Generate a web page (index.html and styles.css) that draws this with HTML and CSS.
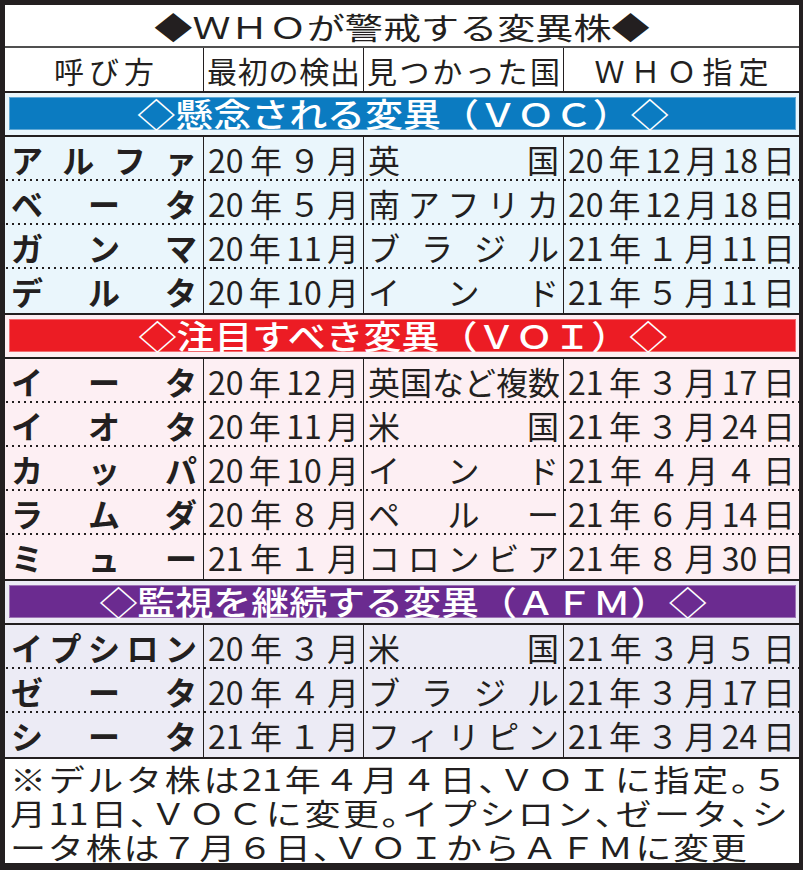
FILE: index.html
```html
<!DOCTYPE html>
<html lang="ja">
<head>
<meta charset="utf-8">
<title>WHOが警戒する変異株</title>
<link rel="stylesheet" href="styles.css">
</head>
<body>
<div class="sheet">
  <div class="title"><span>◆ＷＨＯが警戒する変異株◆</span></div>
  <div class="row head">
    <div class="c mid sp5">呼び方</div>
    <div class="c"><i>最</i><i>初</i><i>の</i><i>検</i><i>出</i></div>
    <div class="c"><i>見</i><i>つ</i><i>か</i><i>っ</i><i>た</i><i>国</i></div>
    <div class="c mid sp6">ＷＨＯ指定</div>
  </div>

  <section class="group voc">
    <div class="band"><div class="bar"><span>◇懸念される変異（ＶＯＣ）◇</span></div></div>
    <div class="row">
      <div class="c name"><i>ア</i><i>ル</i><i>フ</i><i>ァ</i></div>
      <div class="c"><i>20</i><i>年</i><i>９</i><i>月</i></div>
      <div class="c"><i>英</i><i>国</i></div>
      <div class="c"><i>20</i><i>年</i><i>12</i><i>月</i><i>18</i><i>日</i></div>
    </div>
    <div class="row">
      <div class="c name"><i>ベ</i><i>ー</i><i>タ</i></div>
      <div class="c"><i>20</i><i>年</i><i>５</i><i>月</i></div>
      <div class="c"><i>南</i><i>ア</i><i>フ</i><i>リ</i><i>カ</i></div>
      <div class="c"><i>20</i><i>年</i><i>12</i><i>月</i><i>18</i><i>日</i></div>
    </div>
    <div class="row">
      <div class="c name"><i>ガ</i><i>ン</i><i>マ</i></div>
      <div class="c"><i>20</i><i>年</i><i>11</i><i>月</i></div>
      <div class="c"><i>ブ</i><i>ラ</i><i>ジ</i><i>ル</i></div>
      <div class="c"><i>21</i><i>年</i><i>１</i><i>月</i><i>11</i><i>日</i></div>
    </div>
    <div class="row">
      <div class="c name"><i>デ</i><i>ル</i><i>タ</i></div>
      <div class="c"><i>20</i><i>年</i><i>10</i><i>月</i></div>
      <div class="c"><i>イ</i><i>ン</i><i>ド</i></div>
      <div class="c"><i>21</i><i>年</i><i>５</i><i>月</i><i>11</i><i>日</i></div>
    </div>
  </section>

  <section class="group voi">
    <div class="band"><div class="bar"><span>◇注目すべき変異（ＶＯＩ）◇</span></div></div>
    <div class="row">
      <div class="c name"><i>イ</i><i>ー</i><i>タ</i></div>
      <div class="c"><i>20</i><i>年</i><i>12</i><i>月</i></div>
      <div class="c"><i>英</i><i>国</i><i>な</i><i>ど</i><i>複</i><i>数</i></div>
      <div class="c"><i>21</i><i>年</i><i>３</i><i>月</i><i>17</i><i>日</i></div>
    </div>
    <div class="row">
      <div class="c name"><i>イ</i><i>オ</i><i>タ</i></div>
      <div class="c"><i>20</i><i>年</i><i>11</i><i>月</i></div>
      <div class="c"><i>米</i><i>国</i></div>
      <div class="c"><i>21</i><i>年</i><i>３</i><i>月</i><i>24</i><i>日</i></div>
    </div>
    <div class="row">
      <div class="c name"><i>カ</i><i>ッ</i><i>パ</i></div>
      <div class="c"><i>20</i><i>年</i><i>10</i><i>月</i></div>
      <div class="c"><i>イ</i><i>ン</i><i>ド</i></div>
      <div class="c"><i>21</i><i>年</i><i>４</i><i>月</i><i>４</i><i>日</i></div>
    </div>
    <div class="row">
      <div class="c name"><i>ラ</i><i>ム</i><i>ダ</i></div>
      <div class="c"><i>20</i><i>年</i><i>８</i><i>月</i></div>
      <div class="c"><i>ペ</i><i>ル</i><i>ー</i></div>
      <div class="c"><i>21</i><i>年</i><i>６</i><i>月</i><i>14</i><i>日</i></div>
    </div>
    <div class="row">
      <div class="c name"><i>ミ</i><i>ュ</i><i>ー</i></div>
      <div class="c"><i>21</i><i>年</i><i>１</i><i>月</i></div>
      <div class="c"><i>コ</i><i>ロ</i><i>ン</i><i>ビ</i><i>ア</i></div>
      <div class="c"><i>21</i><i>年</i><i>８</i><i>月</i><i>30</i><i>日</i></div>
    </div>
  </section>

  <section class="group afm">
    <div class="band"><div class="bar"><span>◇監視を継続する変異（ＡＦＭ）◇</span></div></div>
    <div class="row">
      <div class="c name"><i>イ</i><i>プ</i><i>シ</i><i>ロ</i><i>ン</i></div>
      <div class="c"><i>20</i><i>年</i><i>３</i><i>月</i></div>
      <div class="c"><i>米</i><i>国</i></div>
      <div class="c"><i>21</i><i>年</i><i>３</i><i>月</i><i>５</i><i>日</i></div>
    </div>
    <div class="row">
      <div class="c name"><i>ゼ</i><i>ー</i><i>タ</i></div>
      <div class="c"><i>20</i><i>年</i><i>４</i><i>月</i></div>
      <div class="c"><i>ブ</i><i>ラ</i><i>ジ</i><i>ル</i></div>
      <div class="c"><i>21</i><i>年</i><i>３</i><i>月</i><i>17</i><i>日</i></div>
    </div>
    <div class="row">
      <div class="c name"><i>シ</i><i>ー</i><i>タ</i></div>
      <div class="c"><i>21</i><i>年</i><i>１</i><i>月</i></div>
      <div class="c"><i>フ</i><i>ィ</i><i>リ</i><i>ピ</i><i>ン</i></div>
      <div class="c"><i>21</i><i>年</i><i>３</i><i>月</i><i>24</i><i>日</i></div>
    </div>
  </section>

  <div class="note">
    <div class="ln">※デルタ株は21年４月４日<b>、</b>ＶＯＩに指定<b>。</b>５</div>
    <div class="ln">月11日<b>、</b>ＶＯＣに変更<b>。</b>イプシロン<b>、</b>ゼータ<b>、</b>シ</div>
    <div class="ln last">ータ株は７月６日<b>、</b>ＶＯＩからＡＦＭに変更</div>
  </div>
</div>
</body>
</html>
```
FILE: styles.css
```css
* { box-sizing: border-box; margin: 0; padding: 0; }

html, body { background: #231f20; }

body {
  width: 803px;
  height: 870px;
  font-family: "Noto Sans CJK JP", "Noto Sans", sans-serif;
  color: #231f20;
}

.sheet {
  width: 803px;
  height: 870px;
  border-style: solid;
  border-color: #231f20;
  border-width: 5px 4px 7px 5px;
  background: #fff;
  display: flex;
  flex-direction: column;
}

/* title */
.title {
  height: 43px;
  flex: none;
  border-bottom: 2px solid #505050;
  display: flex;
  align-items: center;
  justify-content: center;
}
.title span {
  display: inline-block;
  font-size: 30px;
  line-height: 1;
  transform: scaleX(1.27);
}

/* grid rows */
.row {
  display: grid;
  grid-template-columns: 198px 160px 200px 236px;
  height: 44px;
  flex: none;
}
.row:not(:last-child):not(.head) {
  background: linear-gradient(to right, #231f20 2px, transparent 2px) 1px 100% / 6px 2px repeat-x;
}

.c {
  display: flex;
  align-items: center;
  justify-content: space-between;
  padding: 0 4px;
  border-left: 1px solid #231f20;
  font-size: 32px;
  line-height: 1;
  white-space: nowrap;
}
.c:first-child { border-left: none; }
.c i { font-style: normal; }
.c.name { font-weight: 700; padding: 0 6px; }

/* header */
.head {
  height: 45px;
  border-bottom: 2px solid #231f20;
  background: #fff;
}
.head .c { font-size: 30px; padding: 0 3px; }
.head .mid { justify-content: center; }
.sp5 { letter-spacing: 5px; padding-left: 8px !important; }
.sp6 { letter-spacing: 6px; padding-left: 9px !important; }

/* groups */
.group { border-bottom: 2px solid #231f20; flex: none; }
.band {
  height: 44px;
  padding: 4px 3px 5px 4px;
  border-bottom: 2px solid #231f20;
}
.bar {
  height: 33px;
  display: flex;
  align-items: center;
  justify-content: center;
  color: #fff;
  box-shadow: inset 0 0 0 1px rgba(255, 255, 255, 0.35);
}
.bar span {
  display: inline-block;
  font-size: 33px;
  font-weight: 500;
  line-height: 1;
  transform: scaleX(1.15);
}

.voc { background: #eaf6fc; }
.voc .bar { background: #0b7bc1; }
.voi { background: #fdeff3; }
.voi .bar { background: #ec1c24; }
.afm { background: #ecebf5; }
.afm .bar { background: #6b2b90; }

/* footnote */
.note {
  flex: 1;
  background: #fff;
  padding: 2px 0 0 5px;
  font-size: 30px;
  line-height: 34px;
}
.note .ln {
  width: 648px;
  transform: scaleX(1.2);
  transform-origin: left center;
  text-align: justify;
  text-align-last: justify;
}
.note .ln.last { width: 614px; }
.note b {
  font-weight: 400;
  font-feature-settings: "halt";
}
```
